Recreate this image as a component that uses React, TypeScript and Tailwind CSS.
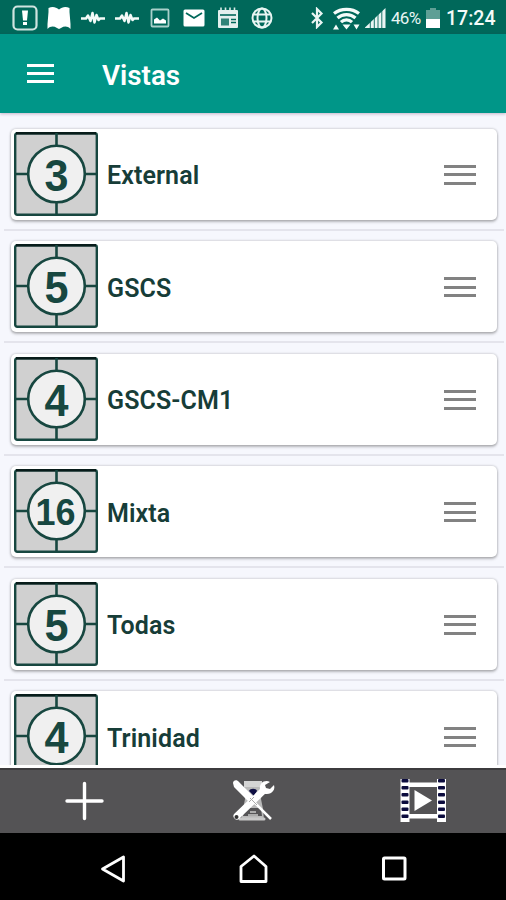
import React from 'react';

interface View {
  name: string;
  cameras: number;
}

const views: View[] = [
  { name: 'External', cameras: 3 },
  { name: 'GSCS', cameras: 5 },
  { name: 'GSCS-CM1', cameras: 4 },
  { name: 'Mixta', cameras: 16 },
  { name: 'Todas', cameras: 5 },
  { name: 'Trinidad', cameras: 4 },
];

const PulseIcon = () => (
  <svg width="26" height="24" viewBox="0 0 26 24" fill="none" stroke="#f4fbf9" strokeWidth="2.500" strokeLinejoin="round">
    <path d="M1 12.500h5l2-3 2.500 5.500 2-8 2 9.500 2-7.500 2 5 1.500-1.500h5" />
  </svg>
);

const StatusBar: React.FC = () => (
  <div className="flex h-[34px] items-center bg-[#00685a] pt-[2px] text-[#e9f5f3]">
    <div className="ml-[8px] grid w-[271px] grid-cols-8 place-items-center">
      <svg width="26" height="26" viewBox="0 0 26 26">
        <rect x="1.500" y="1.500" width="23" height="23" rx="4" fill="none" stroke="#cfe4e0" strokeWidth="2.200" />
        <path d="M10 5.500h6l-1 10h-4z" fill="#fff" />
        <rect x="11" y="17" width="4" height="3" fill="#fff" />
      </svg>
      <svg width="26" height="26" viewBox="0 0 26 26" fill="#fff">
        <path d="M2.500 3c4-2 7.500-1 10.500 1.500 3-2.500 6.500-3.500 10.500-1.500v4l1 12v5c-3-3-6-3-9.500-1l-2 1-2-1c-3.500-2-6.500-2-9.500 1v-5l1-12z" />
      </svg>
      <PulseIcon />
      <PulseIcon />
      <svg width="20" height="20" viewBox="0 0 20 20">
        <rect x="1.500" y="1.500" width="17" height="17" rx="1" fill="none" stroke="#a9d0ca" strokeWidth="1.800" />
        <path d="M4 15.500v-4l3-2 3 3 3-2 3 2v3z" fill="#fff" />
      </svg>
      <svg width="22" height="18" viewBox="0 0 22 18">
        <rect x="0.500" y="0.500" width="21" height="17" rx="1.500" fill="#fff" />
        <path d="M3 4l8 5 8-5" fill="none" stroke="#00685a" strokeWidth="1.800" />
      </svg>
      <svg width="22" height="22" viewBox="0 0 22 22">
        <path d="M4 0.500v3M8.500 0.500v3M13 0.500v3M17.500 0.500v3" stroke="#d9ebe8" strokeWidth="1.600" />
        <rect x="1" y="3" width="20" height="18" rx="1" fill="#e3f0ee" />
        <path d="M3 8h16" stroke="#00685a" strokeWidth="1.600" />
        <path d="M4 11.500h8v7H4z" fill="#2f8377" />
        <path d="M14 12.500h5M14 15.500h5" stroke="#00685a" strokeWidth="1.400" />
      </svg>
      <svg width="24" height="24" viewBox="0 0 24 24" fill="none" stroke="#e9f5f3" strokeWidth="2">
        <circle cx="12" cy="12" r="9.500" />
        <ellipse cx="12" cy="12" rx="4.500" ry="9.500" />
        <path d="M3.500 8.500h17M3.500 15.500h17" />
      </svg>
    </div>
    <svg className="ml-[31px]" width="14" height="22" viewBox="0 0 14 22" fill="none" stroke="#e9f5f3" strokeWidth="2.200">
      <path d="M2 6l9.500 9.500-4.500 4.500V2l4.500 4.500L2 16" />
    </svg>
    <svg className="ml-[8px] mt-[1px]" width="29" height="24" viewBox="0 0 29 24" fill="none" stroke="#f4fbf9" strokeWidth="3.200">
      <path d="M2 6.500c7-5.500 18-5.500 25 0M5.500 11c5-4.500 13-4.500 18 0M9 15.200c3-3 8-3 11 0" />
      <path d="M10.500 17.500h8l-4 5zM1 22.500l3-5 3 5zM21.500 17.500h6l-3 5z" fill="#f4fbf9" stroke="none" />
    </svg>
    <svg className="ml-[4px]" width="22" height="22" viewBox="0 0 22 22" fill="#e9f5f3">
      <path d="M0 20.500L20.500 1v20H0z" />
      <path d="M5.300 14v7M9.300 10v11M13 6v15M16.800 3v18" stroke="#00685a" strokeWidth="0.900" />
    </svg>
    <span className="ml-[4px] w-[34px] text-[17px] leading-none tracking-[-0.700px]">46%</span>
    <svg className="ml-px" width="14" height="20" viewBox="0 0 14 20">
      <path d="M4 0h6v2h4v9H0V2h4z" fill="#5f9f95" />
      <path d="M0 11h14v9H0z" fill="#fff" />
    </svg>
    <span className="ml-[6px] mt-[2px] text-[19.500px] font-medium leading-none text-[#f4fbf9]">17:24</span>
  </div>
);

const Header: React.FC = () => (
  <header className="relative z-10 flex h-[79px] items-center bg-[#009688] pl-[26.500px] shadow-[0_1px_3px_rgba(80,30,80,0.3)]">
    <div className="mb-[1px] flex w-[27px] flex-col gap-[5px]">
      <span className="h-[3px] bg-white" />
      <span className="h-[3px] bg-white" />
      <span className="h-[3px] bg-white" />
    </div>
    <h1 className="ml-[48.500px] mt-[4px] text-[27.800px] font-semibold leading-none text-white">Vistas</h1>
  </header>
);

const ViewTile: React.FC<{ count: number }> = ({ count }) => (
  <svg width="84" height="84" viewBox="0 0 84 84" className="mb-[1px] shrink-0">
    <rect x="1.200" y="1.200" width="81.600" height="81.600" rx="2" fill="#d0d0d0" stroke="#174740" strokeWidth="2.400" />
    <path d="M2 1.200h80" stroke="#081c1a" strokeWidth="2.400" />
    <path d="M42.500 1v82M1 42h82" stroke="#174740" strokeWidth="2.600" />
    <circle cx="42.500" cy="42" r="28.300" fill="#f0f0f0" stroke="#174740" strokeWidth="2.600" />
    <text
      x={count > 9 ? 41.5 : 42.5}
      y={count > 9 ? 55.5 : 58.5}
      textAnchor="middle"
      textLength={count > 9 ? 40 : 24}
      lengthAdjust="spacingAndGlyphs"
      className={count > 9 ? 'text-[37px] font-bold' : 'text-[45px] font-bold'}
      fontFamily="'Liberation Sans', sans-serif"
      fill="#174740"
    >
      {count}
    </text>
  </svg>
);

const ViewRow: React.FC<{ view: View }> = ({ view }) => (
  <li className="ml-[4px] mr-[2px] h-[112.500px] shrink-0 border-b-2 border-[#e4e4ec] pl-[6.500px] pr-[7.500px] pt-[10.500px]">
    <div className="flex h-[91px] items-center rounded-[5px] bg-white pl-[3.500px] pr-[20.500px] shadow-[0_0_2px_1px_rgba(0,0,0,0.12),0_2px_3px_rgba(0,0,0,0.24)]">
      <ViewTile count={view.cameras} />
      <span className="ml-[9px] mt-[3px] flex-1 text-[25px] font-semibold leading-none tracking-[0.100px] text-[#173d38]">{view.name}</span>
      <div className="mt-px flex w-[32px] flex-col gap-[5.500px]">
        <span className="h-[3px] bg-[#828282]" />
        <span className="h-[3px] bg-[#828282]" />
        <span className="h-[3px] bg-[#828282]" />
      </div>
    </div>
  </li>
);

const ToolsIcon = () => (
  <svg className="ml-[3px]" width="44" height="44" viewBox="0 0 44 44">
    <path d="M12 2h18v5l-1 13 2 10 1 11H9l2-11 2-10-1-13z" fill="#b9b9b9" />
    <path d="M12 2h18v6H12z" fill="#d4d4d4" />
    <path d="M13 29h16l1 8H11z" fill="#555456" />
    <path d="M18 33h6M16 36h10" stroke="#c8c8c8" strokeWidth="1.500" />
    <path d="M8 40h24" stroke="#c8c8c8" strokeWidth="3" strokeLinecap="round" />
    <path d="M17 12c1-3 7-3 8 0l-3 5z" fill="#101044" />
    <path d="M1 4c0-3 4-4 6-1l15 15-5 5L2 8z" fill="#fff" />
    <path d="M19 20l20 20" stroke="#fff" strokeWidth="2.500" />
    <path d="M5 37l26-25" stroke="#fff" strokeWidth="7" strokeLinecap="round" />
    <path d="M38 3c-5-3-11 1-10 7 1 5 7 6 11 4 3-2 4-5 3-8l-4 4-4-1-1-3z" fill="#fff" />
    <circle cx="4.500" cy="38" r="2" fill="#333" />
    <path d="M18 19l7 7M22 18l-5 5" stroke="#aaa" strokeWidth="1" />
  </svg>
);

const filmHoles = [2.5, 9.5, 16.5, 24, 31, 38];

const FilmIcon = () => (
  <svg className="ml-[3px]" width="46" height="45" viewBox="0 0 46 45">
    <path d="M0.500 1h9v43h-9zM37 1h9v43h-9z" fill="#fff" />
    <path d="M9 4.500h28V9H9zM9 36h28v4.500H9z" fill="#fff" />
    {filmHoles.map((y) => (
      <g key={y} fill="#0b0b3d">
        <rect x="1.500" y={y - 1.5} width="7" height="3.600" rx="1" />
        <rect x="38" y={y - 1.5} width="7" height="3.600" rx="1" />
      </g>
    ))}
    <path d="M14.500 12v21L32 22.500z" fill="#fff" />
  </svg>
);

const BottomBar: React.FC = () => (
  <div className="grid h-[65px] grid-cols-3 place-items-center border-t-2 border-[#3c3b3d] bg-[#545355] pb-[2px]">
    <svg width="40" height="40" viewBox="0 0 40 40" fill="none" stroke="#fff" strokeWidth="3.400" strokeLinecap="round">
      <path d="M20.500 2.500v35M3 20h35" />
    </svg>
    <ToolsIcon />
    <FilmIcon />
  </div>
);

const NavBar: React.FC = () => (
  <div className="flex h-[67px] items-center bg-black pt-[4px]">
    <svg className="ml-[100px]" width="26" height="28" viewBox="0 0 26 28" fill="none" stroke="#fff" strokeWidth="2.800" strokeLinejoin="round">
      <path d="M23.500 2v24L2.500 14z" />
    </svg>
    <svg className="ml-[113px]" width="30" height="30" viewBox="0 0 30 30" fill="none" stroke="#fff" strokeWidth="2.800" strokeLinejoin="round">
      <path d="M2 12.500L15 2l12 10.500v15H2z" />
    </svg>
    <svg className="ml-[112px]" width="26" height="26" viewBox="0 0 26 26" fill="none" stroke="#fff" strokeWidth="3" strokeLinejoin="round">
      <rect x="2.500" y="2" width="21.500" height="21" rx="1" />
    </svg>
  </div>
);

const App: React.FC = () => {
  return (
    <div className="flex h-[900px] w-[506px] flex-col overflow-hidden bg-[#f6f7fd] font-[Roboto,sans-serif]">
      <StatusBar />
      <Header />
      <ul className="flex min-h-0 flex-1 flex-col overflow-hidden pt-[5px]">
        {views.map((view) => (
          <ViewRow key={view.name} view={view} />
        ))}
      </ul>
      <div className="h-[3px] bg-white" />
      <BottomBar />
      <NavBar />
    </div>
  );
};

export default App;
